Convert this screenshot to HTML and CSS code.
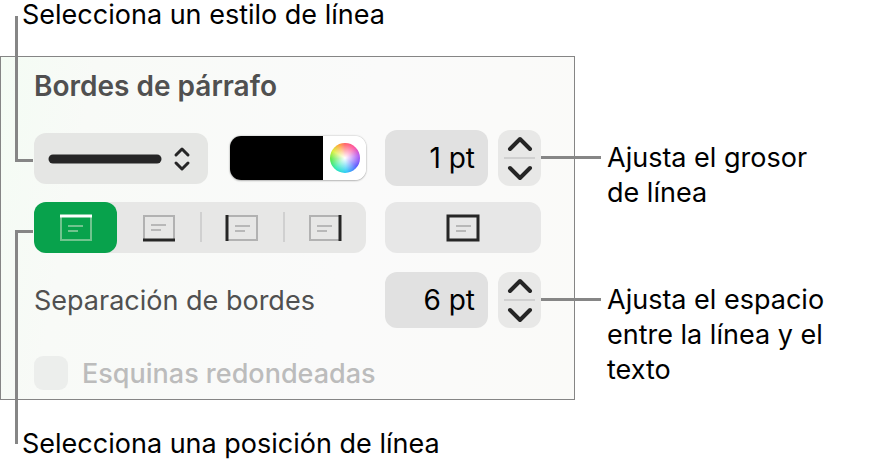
FILE: index.html
```html
<!DOCTYPE html>
<html lang="es">
<head>
    <meta charset="UTF-8">
    <meta name="viewport" content="width=device-width, initial-scale=1.0">
    <title>Bordes de párrafo</title>
    <link rel="stylesheet" href="styles.css">
</head>
<body>
    <main class="figure">
        <p class="caption caption-top">Selecciona un estilo de línea</p>

        <form class="panel">
            <h2>Bordes de párrafo</h2>

            <div class="row row-style">
                <div class="row-left">
                    <div class="line-style">
                        <select aria-label="Estilo de línea">
                            <option value="solid" aria-label="Continua"></option>
                        </select>
                        <svg class="line-sample" viewBox="0 0 146 28" aria-hidden="true">
                            <path d="M5 14H109" stroke-width="9"/>
                            <path d="M128 10l6-6 6 6M128 18l6 6 6-6" stroke-width="3"/>
                        </svg>
                    </div>
                    <div class="color-well">
                        <input type="color" value="#000000" aria-label="Color de línea">
                        <button type="button" aria-label="Rueda de color"><span class="wheel"></span></button>
                    </div>
                </div>
                <div class="row-right">
                    <input class="value" type="text" value="1 pt" aria-label="Grosor de línea">
                    <div class="stepper">
                        <button type="button" aria-label="Aumentar grosor">
                            <svg viewBox="0 0 26 16"><path d="M3 13L13 3l10 10"/></svg>
                        </button>
                        <button type="button" aria-label="Reducir grosor">
                            <svg viewBox="0 0 26 16"><path d="M3 3l10 10L23 3"/></svg>
                        </button>
                    </div>
                </div>
            </div>

            <div class="row row-position">
                <div class="segments">
                    <label class="segment">
                        <input type="radio" name="position" value="top" aria-label="Arriba" checked>
                        <svg viewBox="0 0 34 28">
                            <path class="box" d="M2 2H32V26H2Z"/>
                            <path class="lines" d="M9 12H24M9 17H19"/>
                            <path class="edge" d="M1 2H33"/>
                        </svg>
                    </label>
                    <label class="segment">
                        <input type="radio" name="position" value="bottom" aria-label="Abajo">
                        <svg viewBox="0 0 34 28">
                            <path class="box" d="M2 2H32V26H2Z"/>
                            <path class="lines" d="M9 11H24M9 16H19"/>
                            <path class="edge" d="M1 26H33"/>
                        </svg>
                    </label>
                    <label class="segment">
                        <input type="radio" name="position" value="left" aria-label="Izquierda">
                        <svg viewBox="0 0 34 28">
                            <path class="box" d="M2 2H32V26H2Z"/>
                            <path class="lines" d="M10 12H25M10 17H20"/>
                            <path class="edge" d="M2 1V27"/>
                        </svg>
                    </label>
                    <label class="segment">
                        <input type="radio" name="position" value="right" aria-label="Derecha">
                        <svg viewBox="0 0 34 28">
                            <path class="box" d="M2 2H32V26H2Z"/>
                            <path class="lines" d="M9 12H24M9 17H19"/>
                            <path class="edge" d="M32 1V27"/>
                        </svg>
                    </label>
                </div>
                <button class="all-sides" type="button" aria-label="Todos los lados">
                    <svg viewBox="0 0 34 28">
                        <path class="lines" d="M10 12H25M10 17H20"/>
                        <path class="edge" d="M2 2H32V26H2Z"/>
                    </svg>
                </button>
            </div>

            <div class="row row-offset">
                <label class="offset-label" for="offset">Separación de bordes</label>
                <div class="row-right">
                    <input class="value" type="text" id="offset" value="6 pt">
                    <div class="stepper">
                        <button type="button" aria-label="Aumentar separación">
                            <svg viewBox="0 0 26 16"><path d="M3 13L13 3l10 10"/></svg>
                        </button>
                        <button type="button" aria-label="Reducir separación">
                            <svg viewBox="0 0 26 16"><path d="M3 3l10 10L23 3"/></svg>
                        </button>
                    </div>
                </div>
            </div>

            <div class="rounded">
                <input type="checkbox" id="rounded" disabled>
                <label for="rounded">Esquinas redondeadas</label>
            </div>
        </form>

        <div class="notes">
            <p>Ajusta el grosor de línea</p>
            <p>Ajusta el espacio entre la línea y el texto</p>
        </div>

        <p class="caption caption-bottom">Selecciona una posición de línea</p>
    </main>
</body>
</html>
```

FILE: styles.css
```css
*,
*::before,
*::after {
    margin: 0;
    padding: 0;
    box-sizing: border-box;
}

body {
    font-family: Inter, "Liberation Sans", sans-serif;
    font-size: 27px;
    line-height: 35px;
    color: #000;
    background-color: #fff;
}

input,
button,
select {
    font: inherit;
    border: none;
    appearance: none;
}

svg {
    fill: none;
    stroke: #262626;
    stroke-linecap: round;
    stroke-linejoin: round;
}

.figure {
    display: grid;
    grid-template-columns: minmax(0, 575fr) minmax(0, 321fr);
}

.caption {
    position: relative;
    grid-column: 1 / -1;
    padding-left: 22px;
}

.caption-top {
    height: 56px;
    line-height: 30px;
}

.caption-bottom {
    padding-top: 26px;
}

/* leader lines that join a caption to its control */
.caption::before {
    content: "";
    position: absolute;
    left: 15px;
    width: 18px;
    border-left: 3px solid #868686;
    z-index: 1;
}

.caption-top::before {
    top: 16px;
    height: 146px;
    border-bottom: 3px solid #868686;
}

.caption-bottom::before {
    top: -170px;
    height: 214px;
    border-top: 3px solid #868686;
}

.panel {
    padding: 12px 33px 9px;
    border: 1px solid #858585;
    background: linear-gradient(100deg, #f4fcf4, #f8faf7 15%, #fafafa 60%, #fafaf8);
}

h2 {
    font-size: 28px;
    font-weight: 600;
    line-height: 34px;
    color: #505050;
    margin-bottom: 27px;
}

.row {
    display: grid;
    grid-template-columns: minmax(0, 332fr) minmax(0, 156fr);
    column-gap: 19px;
    align-items: center;
}

.row-left,
.row-right {
    display: flex;
    align-items: center;
    gap: 10px;
}

.row-left {
    gap: 22px;
}

.row-position {
    margin: 16px 0 19px;
}

.line-style {
    position: relative;
    flex: 174;
}

.line-style select {
    display: block;
    width: 100%;
    height: 51px;
    border-radius: 12px;
    background-color: #e5e6e4;
}

.line-sample {
    position: absolute;
    left: 14px;
    top: 12px;
    width: 146px;
    height: 28px;
    pointer-events: none;
}

.color-well {
    display: flex;
    flex: 136;
    height: 44px;
    border-radius: 11px;
    overflow: hidden;
    background-color: #fff;
    box-shadow: 0 0 2px rgba(0, 0, 0, 0.3), 0 1px 2px rgba(0, 0, 0, 0.2);
}

.color-well input {
    flex: 1;
    min-width: 0;
    height: 44px;
    background-color: #000;
}

.color-well input::-webkit-color-swatch-wrapper {
    padding: 0;
}

.color-well input::-webkit-color-swatch {
    border: none;
}

.color-well button {
    display: flex;
    align-items: center;
    justify-content: center;
    width: 43px;
    background-color: #fff;
}

.wheel {
    width: 30px;
    height: 30px;
    border-radius: 50%;
    background:
        radial-gradient(circle, #fff, rgba(255, 255, 255, 0) 72%),
        conic-gradient(#ff5a60, #ff4a9a 40deg, #b050f0 80deg, #5050ff 125deg, #20c8f8 175deg, #20e8b0 220deg, #50e840 265deg, #d8ee30 300deg, #ffa030 335deg, #ff5a60);
}

.value {
    flex: 1;
    min-width: 0;
    height: 56px;
    padding-right: 13px;
    border-radius: 12px;
    font-size: 28px;
    text-align: right;
    color: #000;
    background-color: #e1e1e1;
}

.stepper {
    position: relative;
    display: flex;
    flex-direction: column;
    width: 43px;
    height: 56px;
    padding: 0 6px;
    border-radius: 12px;
    background-color: #e8e8e7;
}

.stepper::after {
    content: "";
    position: absolute;
    left: 100%;
    top: 26px;
    width: 60px;
    height: 3px;
    background-color: #868686;
}

.stepper button {
    display: flex;
    flex: 1;
    align-items: center;
    justify-content: center;
    background: none;
}

.stepper button + button {
    border-top: 2px solid #d0d0d0;
}

.stepper svg {
    width: 26px;
    height: 16px;
    stroke-width: 4px;
}

.segments {
    display: flex;
    height: 51px;
    border-radius: 12px;
    background-color: #e7e7e6;
}

.segment {
    position: relative;
    display: flex;
    flex: 1;
    align-items: center;
    justify-content: center;
    border-radius: 12px;
}

.segment input {
    position: absolute;
    inset: 0;
    opacity: 0;
}

.segment:nth-child(n + 3)::before {
    content: "";
    position: absolute;
    left: 0;
    top: 10px;
    width: 2px;
    height: 30px;
    background-color: #d0d0d0;
}

.segment svg,
.all-sides svg {
    width: 34px;
    height: 28px;
    stroke-linecap: butt;
    stroke-linejoin: miter;
}

.box {
    stroke: #b2b2b2;
    stroke-width: 2px;
}

.lines {
    stroke: #b8b8b8;
    stroke-width: 2px;
}

.edge {
    stroke-width: 3px;
}

.segment:has(:checked) {
    background-color: #08a24c;
}

.segment:has(:checked) .box,
.segment:has(:checked) .lines {
    stroke: #70c48e;
}

.segment:has(:checked) .edge {
    stroke: #fff;
}

.all-sides {
    display: flex;
    align-items: center;
    justify-content: center;
    height: 51px;
    border-radius: 12px;
    background-color: #e7e7e7;
}

.offset-label {
    color: #505050;
}

.rounded {
    display: flex;
    align-items: center;
    gap: 14px;
    height: 34px;
    margin-top: 28px;
    font-weight: 500;
    color: #bcbcbc;
}

.rounded input {
    width: 34px;
    height: 34px;
    border-radius: 9px;
    background-color: #eceeec;
}

.notes {
    display: flex;
    flex-direction: column;
    gap: 72px;
    padding: 84px 56px 0 32px;
}
```
